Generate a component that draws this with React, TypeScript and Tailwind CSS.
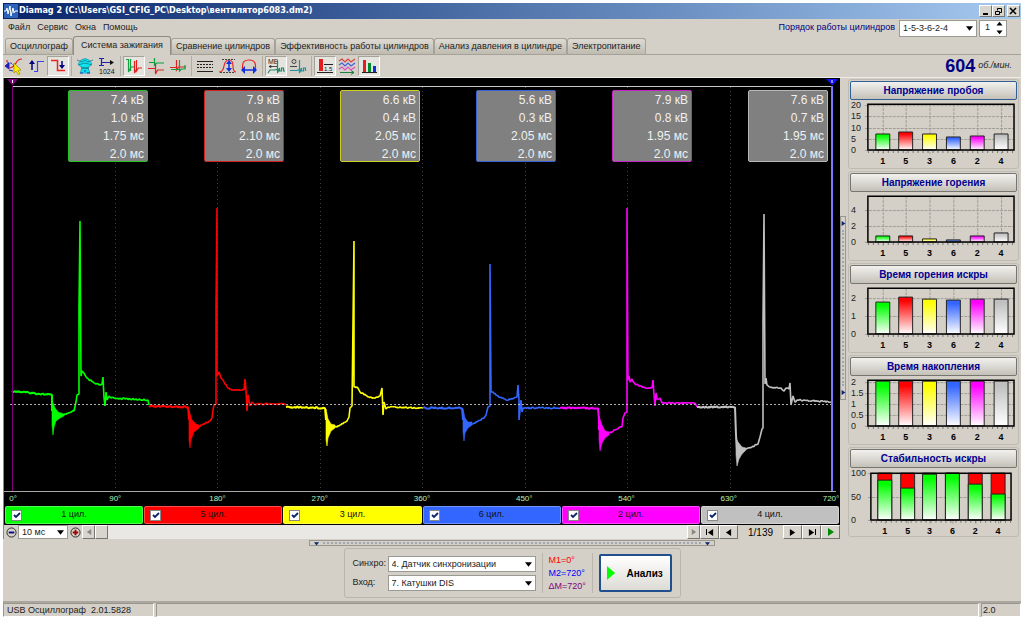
import type { ReactNode } from "react";

type Point = [number, number];

interface Cylinder {
  id: string;
  color: string;
  border: string;
  bar: string;
  readings: string[];
  before: Point[];
  burstTop: Point[];
  burstBottom: Point[];
  after: Point[];
}

interface ChartData {
  title: string;
  ticks: number[];
  scale: number;
  values: number[];
  stacked?: boolean;
}

const cylinders: Cylinder[] = [
  {
    id: "1",
    color: "#00ff00",
    border: "border-[#22c322]",
    bar: "bg-[#00ff00]",
    readings: ["7.4 кВ", "1.0 кВ", "1.75 мс", "2.0 мс"],
    before: [[12, 391], [52, 395], [52, 411]],
    burstTop: [[52, 400], [55, 408], [58, 412], [64, 414]],
    burstBottom: [[64, 416], [60, 418], [56, 421], [54, 427], [53, 435], [52, 425]],
    after: [[64, 415], [74, 411], [76, 402], [77, 395], [79, 394], [79, 308], [80, 221], [81, 376], [82, 371], [87, 378], [93, 382], [99, 385], [102, 384], [103, 377], [104, 398], [105, 406], [106, 392], [107, 400], [109, 396], [111, 398], [148, 400], [149, 405]],
  },
  {
    id: "5",
    color: "#ff0000",
    border: "border-[#d02020]",
    bar: "bg-[#ff0000]",
    readings: ["7.9 кВ", "0.8 кВ", "2.10 мс", "2.0 мс"],
    before: [[149, 406], [188, 407], [189, 420]],
    burstTop: [[189, 410], [192, 420], [196, 424], [199, 425]],
    burstBottom: [[199, 428], [194, 432], [191, 440], [190, 448], [189, 440]],
    after: [[199, 427], [203, 424], [210, 421], [212, 418], [213, 410], [214, 405], [216, 404], [216, 308], [217, 208], [217, 376], [219, 372], [221, 378], [223, 380], [225, 384], [228, 388], [233, 390], [244, 390], [245, 379], [246, 390], [247, 411], [248, 395], [250, 406], [252, 402], [254, 404], [286, 404]],
  },
  {
    id: "3",
    color: "#ffff00",
    border: "border-[#cfcf20]",
    bar: "bg-[#ffff00]",
    readings: ["6.6 кВ", "0.4 кВ", "2.05 мс", "2.0 мс"],
    before: [[286, 407], [325, 408], [326, 420]],
    burstTop: [[326, 409], [328, 419], [331, 424], [335, 425]],
    burstBottom: [[335, 428], [331, 431], [328, 438], [327, 446], [326, 440]],
    after: [[335, 427], [340, 425], [347, 421], [349, 417], [350, 408], [352, 406], [353, 323], [354, 241], [354, 387], [357, 387], [360, 392], [367, 396], [374, 398], [380, 396], [382, 388], [383, 415], [384, 402], [386, 409], [388, 407], [423, 408]],
  },
  {
    id: "6",
    color: "#3366ff",
    border: "border-[#3a62d8]",
    bar: "bg-[#3366ff]",
    readings: ["5.6 кВ", "0.3 кВ", "2.05 мс", "2.0 мс"],
    before: [[423, 408], [462, 408], [463, 420]],
    burstTop: [[463, 409], [465, 418], [468, 422], [472, 422]],
    burstBottom: [[472, 425], [468, 428], [465, 433], [464, 441], [463, 432]],
    after: [[472, 424], [478, 421], [484, 418], [486, 415], [488, 407], [490, 406], [490, 335], [490, 264], [491, 392], [493, 392], [498, 396], [506, 400], [514, 398], [517, 397], [518, 385], [519, 400], [519, 420], [521, 400], [522, 412], [523, 408], [560, 408]],
  },
  {
    id: "2",
    color: "#ff00ff",
    border: "border-[#cc22cc]",
    bar: "bg-[#ff00ff]",
    readings: ["7.9 кВ", "0.8 кВ", "1.95 мс", "2.0 мс"],
    before: [[560, 408], [598, 408], [599, 420], [599, 430]],
    burstTop: [[599, 416], [602, 425], [605, 431], [609, 432]],
    burstBottom: [[609, 435], [605, 438], [602, 443], [600, 451], [599, 440]],
    after: [[609, 433], [615, 430], [622, 427], [623, 418], [625, 413], [627, 412], [627, 311], [627, 208], [628, 380], [629, 376], [630, 382], [632, 379], [635, 384], [640, 386], [646, 388], [652, 388], [653, 380], [654, 395], [655, 406], [656, 393], [657, 399], [660, 398], [662, 403], [695, 403], [697, 407]],
  },
  {
    id: "4",
    color: "#c0c0c0",
    border: "border-[#b8b8b8]",
    bar: "bg-[#c0c0c0]",
    readings: ["7.6 кВ", "0.7 кВ", "1.95 мс", "2.0 мс"],
    before: [[697, 407], [735, 407], [736, 435], [737, 450]],
    burstTop: [[736, 438], [738, 442], [742, 447], [746, 448]],
    burstBottom: [[746, 450], [742, 454], [739, 459], [737, 466], [736, 455]],
    after: [[746, 449], [752, 447], [758, 444], [760, 437], [762, 429], [763, 428], [763, 322], [764, 214], [765, 384], [766, 378], [767, 385], [773, 388], [780, 388], [784, 391], [786, 388], [789, 389], [790, 383], [791, 405], [793, 396], [795, 402], [798, 400], [831, 402]],
  },
];

const charts: ChartData[] = [
  { title: "Напряжение пробоя", ticks: [0, 5, 10, 15, 20], scale: 2.25, values: [7, 8, 7, 5.6, 6.2, 7] },
  { title: "Напряжение горения", ticks: [0, 2, 4], scale: 8, values: [0.7, 0.7, 0.4, 0.3, 0.7, 1.1] },
  { title: "Время горения искры", ticks: [0, 1, 2], scale: 18, values: [1.78, 2.06, 1.95, 1.9, 1.95, 1.95] },
  { title: "Время накопления", ticks: [0, 0.5, 1, 1.5, 2], scale: 22, values: [2.03, 2.03, 2.03, 2.03, 2.03, 2.03] },
  { title: "Стабильность искры", ticks: [0, 50, 100], scale: 0.47, values: [85, 68, 98, 100, 77, 55], stacked: true },
];

const tabs = [
  "Осциллограф",
  "Система зажигания",
  "Сравнение цилиндров",
  "Эффективность работы цилиндров",
  "Анализ давления в цилиндре",
  "Электропитание",
];

// repeatable noise so that the flat parts look like a sampled signal
function noise(x: number) {
  const v = Math.sin(x * 12.9898) * 43758.5453;
  return (v - Math.floor(v) - 0.5) * 1.6;
}

function tracePath(points: Point[]) {
  const out: string[] = [];
  points.forEach(([x, y], i) => {
    if (i > 0) {
      const [px, py] = points[i - 1];
      if (x - px > 2) {
        for (let sx = px + 1; sx < x; sx++) {
          const sy = py + ((y - py) * (sx - px)) / (x - px);
          out.push(`${sx} ${(sy + noise(sx)).toFixed(1)}`);
        }
      }
    }
    out.push(`${x} ${y}`);
  });
  return "M" + out.join("L");
}

function Arrow({ dir, className }: { dir: "up" | "down" | "left" | "right"; className?: string }) {
  const shapes = { up: "M0 6L4 1L8 6z", down: "M0 2L4 7L8 2z", left: "M7 0L1 4L7 8z", right: "M1 0L7 4L1 8z" };
  return (
    <svg viewBox="0 0 8 8" className={className ?? "h-2 w-2"} fill="currentColor">
      <path d={shapes[dir]} />
    </svg>
  );
}

function Dropdown({ id, value, label, className }: { id: string; value: string; label?: string; className: string }) {
  return (
    <div className={`relative ${className}`}>
      <select
        id={id}
        aria-label={label}
        defaultValue={value}
        className="h-full w-full appearance-none border border-[#9a9a94] bg-white pl-[3px] text-[9px] leading-[12px] whitespace-pre text-[#222]"
      >
        <option>{value}</option>
      </select>
      <Arrow dir="down" className="pointer-events-none absolute top-1/2 right-1 h-[7px] w-[7px] -translate-y-1/2 text-black" />
    </div>
  );
}

function Tool({ label, pressed, children }: { label: string; pressed?: boolean; children: ReactNode }) {
  return (
    <button
      aria-label={label}
      aria-pressed={!!pressed}
      className={
        pressed
          ? "flex h-5 w-[22px] items-center justify-center border border-t-[#a5a29a] border-r-white border-b-white border-l-[#a5a29a] bg-[#e6e4df]"
          : "flex h-5 w-[22px] items-center justify-center"
      }
    >
      <svg viewBox="0 0 18 18" className="h-[18px] w-[18px] shrink-0" fill="none" strokeWidth="1">
        {children}
      </svg>
    </button>
  );
}

function Separator() {
  return <div className="mx-[2px] h-5 w-px bg-[#b0ada5]" />;
}

function Toolbar() {
  return (
    <div className="flex h-[22px] items-center">
      <Tool label="Курсор">
        <path d="M2 3v2M2 7v2M17 2q-4 0-6 4t-6 5" stroke="#e02020" strokeWidth="1.2" />
        <path d="M2 6q5-1 7 3" stroke="#2020c0" strokeDasharray="2 1" />
        <path d="M0 9l4-3v6zM4 13l4 1" fill="#2020c0" stroke="#2020c0" />
        <path d="M9 6l7 7-3 .5L15 17l-2 .5-2-3.5-2 2z" fill="#ffee00" stroke="#8a7a00" strokeWidth=".6" />
      </Tool>
      <Tool label="Фронт">
        <path d="M7 14.5h3.500V4.500H17" stroke="#3344ee" strokeWidth="1.2" />
        <path d="M5 13V6" stroke="#000080" strokeWidth="1.5" />
        <path d="M2 7l3-4 3 4z" fill="#000080" />
      </Tool>
      <Tool label="Спад" pressed>
        <path d="M2 3.500h6.500v10H16" stroke="#ee2020" strokeWidth="1.5" />
        <path d="M13 4v5" stroke="#000080" strokeWidth="1.5" />
        <path d="M10 8h6l-3 4z" fill="#000080" />
      </Tool>
      <Separator />
      <Tool label="Трамблёр">
        <path d="M5 3q4-3 8 0l3 4-2 2-2 2 2 5H4l2-5-2-2-2-2z" fill="#10e5ee" stroke="#20a0b0" strokeWidth=".8" />
        <path d="M1 3l5 2 3-2 3 2 5-2M2 8l7-2 7 2M5 10l8 2M13 10l-8 2" stroke="#107890" strokeWidth=".8" />
        <path d="M4 16h3M11 16h3M8 14h2" stroke="#2040c0" strokeWidth="1.2" />
      </Tool>
      <Tool label="Время">
        <path d="M3.500 1v8M1 1.500h5M1 8.500h5M4 5.500h8" stroke="#2020b0" strokeWidth="1.2" />
        <path d="M12 3l4 2.500-4 2.500z" fill="#111" />
        <text x="1" y="17" fontSize="7" fontFamily="Liberation Sans" fill="#111">1024</text>
      </Tool>
      <Separator />
      <Tool label="Последовательно" pressed>
        <path d="M1 2.500h2.500V15l1.500-3 1-2h3.500" stroke="#10a040" strokeWidth="1.2" />
        <path d="M5.500 2v12" stroke="#10a040" strokeWidth="1.2" />
        <path d="M9.500 4v12l2-4V3v11l2-3H17" stroke="#e02020" strokeWidth="1.2" />
      </Tool>
      <Tool label="Друг под другом">
        <path d="M2 5.500h5.500V1v7l2-2H17" stroke="#10a040" strokeWidth="1.2" />
        <path d="M1 11.500h7.500V7v10l2-4H17" stroke="#e02020" strokeWidth="1.2" />
      </Tool>
      <Tool label="Наложение">
        <path d="M1 10.500h6.500V3v10l2-3H17" stroke="#e02020" strokeWidth="1.2" />
        <path d="M2 12.500h8.500V3v11l2-2H16V8" stroke="#10a040" strokeWidth="1.2" />
      </Tool>
      <Separator />
      <Tool label="Линии">
        <path d="M1 4.500h16M1 14.500h16" stroke="#222" />
        <path d="M1 7.500h16M1 10.500h16" stroke="#222" strokeDasharray="2 1" />
      </Tool>
      <Tool label="Размах">
        <path d="M1 15q4 0 5-6t5-6q4 0 4 6t3 6" stroke="#ee2020" strokeWidth="1.2" />
        <path d="M4 2.500h13M2 15.500h15" stroke="#444" strokeDasharray="2 1" />
        <path d="M11 5v7" stroke="#1030e0" strokeWidth="1.5" />
        <path d="M8 7l3-4 3 4zM8 11l3 4 3-4z" fill="#1030e0" />
      </Tool>
      <Tool label="Период">
        <path d="M2.500 12V9q0-6 6.500-6t6.500 6v3" stroke="#ee2020" strokeWidth="1.2" />
        <path d="M4 13h10" stroke="#1030e0" strokeWidth="1.500" />
        <path d="M1 13l4-4v8zM17 13l-4-4v8z" fill="#1030e0" />
      </Tool>
      <Separator />
      <Tool label="Метки" pressed>
        <text x="1" y="7" fontSize="7" fontFamily="Liberation Sans" fill="#222">МБ</text>
        <path d="M2 9.500h8M2 9.500l2-1v2z" stroke="#222" strokeWidth=".8" />
        <path d="M1 16l2-3h5l2.500-1V3v13l2-5v3h2v-3h2v3H18" stroke="#208868" strokeWidth="1.2" />
      </Tool>
      <Tool label="Градусы">
        <circle cx="5" cy="4.500" r="2" stroke="#444" />
        <path d="M1 9.500h7" stroke="#444" />
        <path d="M1 13.500h7l2.500-1V3v13l2-5v3h2v-3h2v3" stroke="#2090a0" strokeWidth="1.2" />
      </Tool>
      <Separator />
      <Tool label="Значения" pressed>
        <path d="M3 2h4v12H3z" fill="#e02020" />
        <path d="M1 15.500h16M8 7.500h9" stroke="#222" />
        <text x="8" y="14" fontSize="6" fontFamily="Liberation Sans" fill="#111">1.5</text>
      </Tool>
      <Tool label="Волны">
        <path d="M1 4l3-2 3 3 3-3 3 3 4-3" stroke="#e04040" strokeWidth="1.2" />
        <path d="M1 8l3-2 3 3 3-3 3 3 4-3" stroke="#4060e0" strokeWidth="1.2" />
        <path d="M1 12l3-2 3 3 3-3 3 3 4-3" stroke="#e050c0" strokeWidth="1.2" />
        <path d="M2 15.500h14M13 13.500l3 2-3 2" stroke="#208040" />
      </Tool>
      <Tool label="Диаграммы" pressed>
        <path d="M3 3h3v12H3z" fill="#e02020" />
        <path d="M8 6h3v9H8z" fill="#008a30" />
        <path d="M13 9h3v6h-3z" fill="#1030d0" />
        <path d="M2 15.500h15" stroke="#222" />
      </Tool>
      <div className="ml-auto flex items-center pr-[9px] text-[#000080]">
        <span className="text-[18px] font-bold">604</span>
        <span className="ml-[3px] text-[9px] text-[#222] italic">об./мин.</span>
      </div>
    </div>
  );
}

function Scope() {
  const grid = [1, 2, 3, 4, 5, 6, 7].map((n) => Math.round(12 + n * 102.5));
  return (
    <div className="bg-black">
      <div className="relative">
        <svg viewBox="4 78 836 414" preserveAspectRatio="none" className="block h-[414px] w-full" fill="none">
          {grid.map((x) => (
            <path key={x} d={`M${x + 0.5} 87V490`} stroke="#404040" strokeDasharray="1 3" />
          ))}
          <path d="M12 86.5H832" stroke="#c8c8c8" />
          <path d="M4 491.5H836" stroke="#a8a8a8" />
          {cylinders.map((c) => (
            <g key={c.id} stroke={c.color} strokeWidth="1.4" strokeLinejoin="bevel">
              <path d={tracePath(c.before)} strokeWidth="2" />
              <path d={`M${[...c.burstTop, ...c.burstBottom].map((p) => p.join(" ")).join("L")}z`} fill={c.color} strokeWidth=".6" />
              <path d={tracePath(c.after)} strokeWidth="1.6" />
            </g>
          ))}
          <path d="M10 404.5H832" stroke="#b0b0b0" strokeDasharray="2 2" />
          <path d="M12.5 86V491" stroke="#800080" />
          <path d="M832 86V491" stroke="#7878ff" strokeWidth="2" />
          <path d="M7 79h11l-5 6h-1z" fill="#800080" />
          <path d="M826 79h12l-5 6h-1z" fill="#1010ff" />
          <path d="M12.5 80v3M832 80v3" stroke="#fff" />
        </svg>
        <div className="absolute top-3 right-3 left-2 grid grid-cols-6 justify-items-end">
          {cylinders.map((c) => (
            <div
              key={c.id}
              className={`h-[72px] w-20 rounded-[2px] border bg-[#808080] pr-[3px] text-right text-[12px] leading-[18px] text-[#f0f0f0] ${c.border}`}
            >
              {c.readings.map((r, i) => (
                <div key={i}>{r}</div>
              ))}
            </div>
          ))}
        </div>
      </div>
      <div className="flex h-[14px] justify-between overflow-hidden text-[8px] leading-[13px] text-[#b8f0b8]">
        {[0, 90, 180, 270, 360, 450, 540, 630, 720].map((deg) => (
          <span key={deg} className="flex w-[18px] justify-center">
            {deg}°
          </span>
        ))}
      </div>
      <div className="grid h-[19px] grid-cols-6 gap-px px-px pb-px">
        {cylinders.map((c) => (
          <label
            key={c.id}
            className={`relative flex items-center justify-center rounded-[2px] border border-white/30 text-[9px] text-[#111] ${c.bar}`}
          >
            <input
              type="checkbox"
              defaultChecked
              className="peer absolute left-[5px] h-[11px] w-[11px] appearance-none border border-[#888] bg-white"
            />
            <svg
              viewBox="0 0 11 11"
              className="pointer-events-none absolute left-[5px] hidden h-[11px] w-[11px] peer-checked:block"
              fill="none"
              stroke="#0a246a"
              strokeWidth="1.8"
            >
              <path d="M3 5l2 2 4-4" />
            </svg>
            {c.id} цил.
          </label>
        ))}
      </div>
    </div>
  );
}

function Zoom({ plus }: { plus?: boolean }) {
  return (
    <button aria-label={plus ? "Увеличить" : "Уменьшить"} className="flex w-[14px] items-center justify-center">
      <svg viewBox="0 0 12 12" className="h-[11px] w-[11px]" fill="none">
        <circle cx="6" cy="6" r="5" stroke="#222" />
        <path d={plus ? "M3 6h6M6 3v6" : "M3 6h6"} stroke={plus ? "#a00000" : "#000080"} strokeWidth="2" />
      </svg>
    </button>
  );
}

const raised =
  "flex items-center justify-center border border-t-white border-l-white border-r-[#77756f] border-b-[#77756f] bg-[#d8d5ce]";

function ScrollRow() {
  return (
    <div className="flex h-[14px] bg-[#d4d0c8] text-black">
      <Zoom />
      <Dropdown id="sweep" label="Развёртка" value="10 мс" className="h-[14px] w-[50px]" />
      <Zoom plus />
      <button aria-label="Влево" className={`w-[13px] text-[#8a8882] ${raised}`}>
        <Arrow dir="left" className="h-[6px] w-[6px]" />
      </button>
      <div className="flex flex-1 bg-[#eae8e4]">
        <div className={`w-[13px] ${raised}`} />
      </div>
      <button aria-label="Вправо" className={`w-[13px] text-[#8a8882] ${raised}`}>
        <Arrow dir="right" className="h-[6px] w-[6px]" />
      </button>
      <button aria-label="Первый" className={`w-[19px] ${raised}`}>
        <span className="h-[6px] w-px bg-black" />
        <Arrow dir="left" className="h-[7px] w-[7px]" />
      </button>
      <button aria-label="Предыдущий" className={`w-[19px] ${raised}`}>
        <Arrow dir="left" className="h-[7px] w-[7px]" />
      </button>
      <span className="w-[45px] text-center text-[10px] leading-[15px]">1/139</span>
      <button aria-label="Следующий" className={`w-[19px] ${raised}`}>
        <Arrow dir="right" className="h-[7px] w-[7px]" />
      </button>
      <button aria-label="Последний" className={`w-[19px] ${raised}`}>
        <Arrow dir="right" className="h-[7px] w-[7px]" />
        <span className="h-[6px] w-px bg-black" />
      </button>
      <button aria-label="Пуск" className={`w-[19px] text-[#008a00] ${raised}`}>
        <Arrow dir="right" />
      </button>
    </div>
  );
}

function BarChart({ chart, active }: { chart: ChartData; active: boolean }) {
  const { ticks, scale, values, stacked } = chart;
  const top = stacked ? 5 : 4;
  const base = stacked ? 52 : 50;
  const left = stacked ? 22 : 19;
  const right = stacked ? 163 : 166;
  const pitch = stacked ? 22.7 : 23.8;
  const first = stacked ? 36 : 33.5;
  const centers = values.map((_, i) => Math.round(first + i * pitch));
  return (
    <section className="rounded-[3px] border border-[#bebbb3] p-px">
      <button
        className={`h-[19px] w-full rounded-[2px] border bg-linear-to-b from-[#f2f1ee] to-[#c4c1b8] text-[10px] leading-[16px] font-bold text-[#000090] ${
          active ? "border-[#2f5f94]" : "border-[#77756f]"
        }`}
      >
        {chart.title}
      </button>
      <svg viewBox="1 0 168 67" className="block h-[67px] w-full" fill="none" fontFamily="Liberation Sans">
        <defs>
          {cylinders.map((c) => (
            <linearGradient key={c.id} id={`fill-${c.id}`} x1="0" y1="0" x2="0" y2="1">
              <stop offset="0.1" stopColor={c.color} />
              <stop offset="1" stopColor="#fff" />
            </linearGradient>
          ))}
        </defs>
        {ticks.map((t) => (
          <g key={t}>
            <path d={`M${left - 3} ${Math.round(base - t * scale) + 0.5}H${right}`} stroke="#a09d96" strokeDasharray="3 1" />
            <text x="2" y={Math.round(base - t * scale) + 3} fontSize="9" fill="#222">
              {t}
            </text>
          </g>
        ))}
        {centers.map((x, i) => {
          const h = Math.round(values[i] * scale);
          return (
            <g key={x}>
              <path d={`M${x + 0.5} ${top}V${base + 4}`} stroke="#a09d96" strokeDasharray="3 1" />
              {stacked && <path d={`M${x - 7} ${top}h14V${base}h-14z`} fill="#ff0000" stroke="#222" />}
              <path
                d={`M${x - 7} ${base - h}h14v${h}h-14z`}
                fill={stacked ? "url(#fill-1)" : `url(#fill-${cylinders[i].id})`}
                stroke="#222"
              />
              <text x={x} y={base + 14} fontSize="9" fontWeight="bold" textAnchor="middle" fill="#000">
                {cylinders[i].id}
              </text>
            </g>
          );
        })}
        <path d={`M${left} ${base + 2}H${right}`} stroke="#777" strokeWidth="2" strokeDasharray="1 4" />
        <path d={`M${left} ${top}H${right}V${base}H${left}z`} stroke="#000" strokeWidth="1.5" />
      </svg>
    </section>
  );
}

export default function App() {
  return (
    <div className="min-h-screen bg-white p-[3px] font-['Liberation_Sans',Arial,sans-serif] text-[9px] text-[#222]">
      <div className="flex flex-col bg-[#d4d0c8]">
        <header className="flex h-4 items-center bg-linear-to-r from-[#0a246a] to-[#a6caf0] px-px text-white">
          <svg viewBox="0 0 14 14" className="h-[14px] w-[14px]" fill="none">
            <path d="M0 0h14v14H0z" fill="#2c62b8" />
            <path d="M0 7h2l1-3 1 6 2-8 1 10 2-8 1 5 1-2h3" stroke="#fff" />
          </svg>
          <h1 className="ml-px font-['DejaVu_Sans_Condensed','Liberation_Sans',sans-serif] text-[9px] font-bold">
            Diamag 2 (C:\Users\GSI_CFIG_PC\Desktop\вентилятор6083.dm2)
          </h1>
          <div className="ml-auto flex h-3 text-black">
            <button aria-label="Свернуть" className={`w-[13px] ${raised}`}>
              <span className="mt-[5px] h-[2px] w-[5px] bg-black" />
            </button>
            <button aria-label="Восстановить" className={`w-[13px] ${raised}`}>
              <svg viewBox="0 0 9 9" className="h-[9px] w-[9px]" fill="none" stroke="#000">
                <path d="M3.500 3.500v-2h4v4h-2M1.500 4.500h4v3h-4z" />
              </svg>
            </button>
            <button aria-label="Закрыть" className={`ml-[2px] w-[13px] ${raised}`}>
              <svg viewBox="0 0 9 9" className="h-[9px] w-[9px]" stroke="#000" strokeWidth="1.5">
                <path d="M1 1l6 6M7 1l-6 6" />
              </svg>
            </button>
          </div>
        </header>

        <div className="flex h-[18px] items-center">
          <nav className="flex gap-[7px] pl-[5px]">
            {["Файл", "Сервис", "Окна", "Помощь"].map((item) => (
              <button key={item}>{item}</button>
            ))}
          </nav>
          <div className="ml-auto flex items-center pr-[14px]">
            <label htmlFor="order" className="mr-1 text-[#000080]">
              Порядок работы цилиндров
            </label>
            <Dropdown id="order" value="1-5-3-6-2-4" className="h-[17px] w-[78px]" />
            <div className="ml-[2px] flex h-[17px] w-7 items-center border border-[#9a9a94] bg-white">
              <input aria-label="Цилиндр" defaultValue="1" className="w-4 pl-[5px] text-[9px]" />
              <div className="flex flex-col gap-[2px] text-black">
                <button aria-label="Больше">
                  <Arrow dir="up" className="h-[6px] w-[7px]" />
                </button>
                <button aria-label="Меньше">
                  <Arrow dir="down" className="h-[6px] w-[7px]" />
                </button>
              </div>
            </div>
          </div>
        </div>

        <div role="tablist" className="flex h-[18px] items-end border-b border-[#a5a29a] pl-[2px]">
          {tabs.map((tab, i) => (
            <button
              key={tab}
              role="tab"
              aria-selected={i === 1}
              className={
                i === 1
                  ? "-mb-px h-[19px] rounded-t-[3px] border border-b-0 border-[#8f8c85] bg-[#d4d0c8] px-[7px]"
                  : "h-4 rounded-t-[3px] border border-b-0 border-[#a5a29a] bg-linear-to-b from-[#dedbd4] to-[#bfbbb0] px-[4px]"
              }
            >
              {tab}
            </button>
          ))}
        </div>

        <Toolbar />

        <main className="flex border-t border-[#eeece8]">
          <div className="min-w-0 flex-1 border-l border-[#888]">
            <Scope />
            <ScrollRow />
          </div>
          <div className="flex w-[181px] items-start pt-px">
            <div className="mt-[137px] flex h-[184px] w-[6px] flex-col items-center justify-between border border-[#99968f] py-1 text-[#0a246a]">
              <Arrow dir="right" className="h-[5px] w-[5px]" />
              <span className="my-1 w-0 flex-1 border-l-2 border-dotted border-[#a0a6b4]" />
              <Arrow dir="right" className="h-[5px] w-[5px]" />
            </div>
            <div className="ml-[2px] flex flex-1 flex-col gap-[2px] pr-[2px]">
              {charts.map((chart, i) => (
                <BarChart key={chart.title} chart={chart} active={i === 0} />
              ))}
            </div>
          </div>
        </main>

        <div className="flex flex-col items-center border-b-2 border-[#aaa79f] pt-px pb-[3px]">
          <div className="flex h-[6px] w-[406px] items-center border border-[#99968f] px-1 text-[#0a246a]">
            <Arrow dir="down" className="h-[5px] w-[5px]" />
            <span className="mx-1 flex-1 border-t-2 border-dotted border-[#a0a6b4]" />
            <Arrow dir="down" className="h-[5px] w-[5px]" />
          </div>
          <div className="mt-[2px] flex h-[50px] items-center rounded-[3px] border border-[#b9b6ae] px-2">
            <div className="grid grid-cols-[35px_148px] items-center gap-y-[3px]">
              <label htmlFor="sync">Синхро:</label>
              <Dropdown id="sync" value="4.  Датчик синхронизации" className="h-4" />
              <label htmlFor="input">Вход:</label>
              <Dropdown id="input" value="7.  Катушки DIS" className="h-4" />
            </div>
            <div className="mx-[6px] flex h-10 w-[51px] flex-col justify-end border-x border-[#b9b6ae] pl-[6px] text-[9px] leading-[13px]">
              <span className="text-[#ff0000]">M1=0°</span>
              <span className="text-[#0000ff]">M2=720°</span>
              <span className="text-[#800080]">ΔM=720°</span>
            </div>
            <button className="flex h-[38px] w-[73px] items-center rounded-[2px] border-2 border-[#1f4f8c] bg-linear-to-b from-white to-[#dddbd5] pl-[6px] text-[10px] font-bold text-black">
              <svg viewBox="0 0 8 14" className="mr-3 h-[14px] w-2" fill="#00ff00">
                <path d="M0 0l8 7-8 7z" />
              </svg>
              Анализ
            </button>
          </div>
        </div>

        <footer className="flex h-[14px] gap-[2px] leading-[13px]">
          <div className="w-[151px] border border-t-[#99968f] border-r-white border-b-white border-l-[#99968f] pl-[3px] whitespace-pre">
            USB Осциллограф  2.01.5828
          </div>
          <div className="flex-1 border border-t-[#99968f] border-r-white border-b-white border-l-[#99968f]" />
          <div className="w-10 border border-t-[#99968f] border-r-white border-b-white border-l-[#99968f] pl-px">2.0</div>
        </footer>
      </div>
    </div>
  );
}
